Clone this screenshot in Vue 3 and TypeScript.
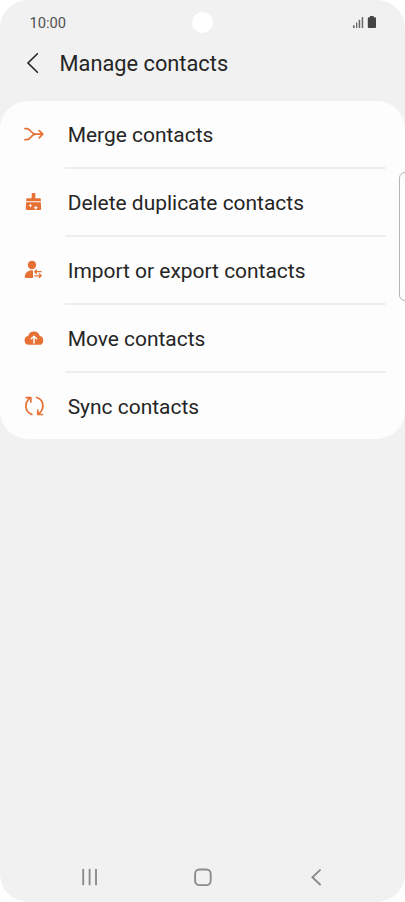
<script setup lang="ts">
type IconName = 'merge' | 'clean' | 'transfer' | 'cloud' | 'sync'

interface MenuItem {
  icon: IconName
  label: string
}

const items: MenuItem[] = [
  { icon: 'merge', label: 'Merge contacts' },
  { icon: 'clean', label: 'Delete duplicate contacts' },
  { icon: 'transfer', label: 'Import or export contacts' },
  { icon: 'cloud', label: 'Move contacts' },
  { icon: 'sync', label: 'Sync contacts' },
]
</script>

<template>
  <div class="screen">
    <div class="status">
      <span class="time">10:00</span>
      <svg class="indicators" width="26" height="14" viewBox="0 0 26 14">
        <path class="signal" d="M1 10.3h1.6V13H1zM4 7.6h1.3V13H4zM6.700 4.800h1.500V13H6.700zM9.700 2h1.500v11H9.700z" />
        <path class="battery" d="M18 1h3.600v1.200H23q1 0 1 1V12q0 1-1 1h-6.200q-1 0-1-1V3.200q0-1 1-1H18z" />
      </svg>
      <span class="camera"></span>
    </div>

    <header class="header">
      <svg class="back" width="14" height="22" viewBox="0 0 14 22">
        <path d="M11.400 1.700L2 11l9.400 9.300" />
      </svg>
      <h1 class="title">Manage contacts</h1>
    </header>

    <ul class="card">
      <li v-for="item in items" :key="item.label" class="row">
        <svg class="icon" width="40" height="40" viewBox="0 0 40 40">
          <g v-if="item.icon === 'merge'" class="line">
            <path d="M10 13.600H12C15.500 13.600 16.300 19.200 20.300 19.200H27.600M10 24.700H12C15.500 24.700 16.300 19.200 20.300 19.200M24.200 15.600L27.800 19.200L24.200 22.800" />
          </g>
          <g v-else-if="item.icon === 'clean'">
            <path class="fill" d="M16.700 10.700q0-.7.7-.7h2.200q.7 0 .7.700v4.500h4.300q1.300 0 1.300 1.300v1.800H11.200v-1.800q0-1.300 1.300-1.300h4.200z" />
            <path class="fill" d="M11.200 19.300h14.600l.4 6.500q0 1.200-1.200 1.200H12q-1.200 0-1.200-1.200z" />
            <path class="cut" d="M15.400 20.600l.6 1.500 1.500.6-1.500.6-.6 1.500-.6-1.500-1.500-.6 1.500-.6zM20.800 22.400l.7 1.700 1.700.7-1.700.7-.7 1.700-.7-1.700-1.700-.7 1.700-.7z" />
          </g>
          <g v-else-if="item.icon === 'transfer'">
            <circle class="fill" cx="17" cy="14" r="4.200" />
            <path class="fill" d="M16.800 19.200c.8 0 1.200.4 1.200 1.100v6.700h-6.700c-1.200 0-1.700-.7-1.500-1.900.5-3.500 3.400-5.900 7-5.900z" />
            <path class="thin" d="M26 20.700h-6.200M21.600 18.900l-1.900 1.800 1.900 1.800M19.800 24.800h6.400M24.300 23l1.900 1.800-1.900 1.800" />
          </g>
          <g v-else-if="item.icon === 'cloud'">
            <path class="fill" d="M14.200 25.800a4.400 4.400 0 0 1-1.100-8.700 6 6 0 0 1 11.700 0 4.400 4.400 0 0 1-1 8.700z" />
            <path class="arrow" d="M19 24v-6.500M16.300 19.800L19 17.200l2.700 2.600" />
          </g>
          <g v-else class="line">
            <path d="M16.800 27.400C9.700 24.700 8.600 16 15.400 10.700M11.300 10.700h4.500v4.300M21.700 10.500C29.200 13.200 30.100 21.800 23.200 27.200M27.400 27.500h-4.600v-4.300" />
          </g>
        </svg>
        <span class="label">{{ item.label }}</span>
      </li>
    </ul>

    <span class="edge-handle"></span>

    <nav class="nav">
      <svg width="24" height="24" viewBox="0 0 24 24"><path d="M6.200 4.800v14.600M12.600 4.800v14.600M19 4.800v14.600" /></svg>
      <svg width="24" height="24" viewBox="0 0 24 24"><rect x="4.100" y="4.500" width="15.600" height="15.600" rx="4.400" /></svg>
      <svg width="24" height="24" viewBox="0 0 24 24"><path d="M16 5.100L8.400 12.300l7.600 7.200" /></svg>
    </nav>
  </div>
</template>

<style>
body {
  margin: 0;
  background: #fff;
}
</style>

<style scoped>
.screen {
  position: relative;
  display: flex;
  flex-direction: column;
  width: 405px;
  height: 902px;
  overflow: hidden;
  border-radius: 28px;
  background: #f1f1f1;
  font-family: Roboto, sans-serif;
  color: #252525;
}
.status {
  display: flex;
  align-items: center;
  justify-content: space-between;
  height: 45px;
  padding: 0 27px 0 29.500px;
}
.time {
  font-size: 14.700px;
  line-height: 20px;
  padding-top: 1px;
  color: #505050;
}
.indicators {
  margin-top: -1px;
}
.signal {
  fill: #666;
}
.battery {
  fill: #444;
}
.camera {
  position: absolute;
  top: 12px;
  left: 191.500px;
  width: 21px;
  height: 21px;
  border-radius: 50%;
  background: #fff;
}
.header {
  display: flex;
  align-items: center;
  height: 36px;
  padding: 0 0 19.500px 26px;
}
.back {
  fill: none;
  stroke: #252525;
  stroke-width: 1.6;
  stroke-linecap: round;
}
.title {
  margin: 0 0 0 19.500px;
  padding-top: 2px;
  font-size: 21.800px;
  font-weight: 400;
  line-height: 30px;
}
.card {
  margin: 0;
  padding: 0;
  list-style: none;
  border-radius: 28px;
  background: #fdfdfd;
  height: 338.500px;
}
.row {
  position: relative;
  display: flex;
  align-items: center;
  height: 68px;
  padding-left: 15px;
}
.row + .row::before {
  content: '';
  position: absolute;
  top: -1.500px;
  left: 65px;
  right: 19.500px;
  height: 2px;
  background: #eeeeee;
}
.icon {
  margin-top: 1px;
}
.label {
  margin-left: 12.700px;
  padding-top: 1px;
  font-size: 20.950px;
  line-height: 28px;
}
.fill {
  fill: #e77034;
}
.cut {
  fill: #fdfdfd;
}
.line,
.thin,
.arrow {
  fill: none;
  stroke: #e77034;
  stroke-width: 1.700;
  stroke-linecap: round;
  stroke-linejoin: round;
}
.thin {
  stroke-width: 1.300;
}
.arrow {
  stroke: #fdfdfd;
  stroke-width: 1.500;
}
.edge-handle {
  position: absolute;
  top: 172px;
  left: 399px;
  box-sizing: border-box;
  width: 12px;
  height: 129px;
  border: 1.500px solid #b5b5b5;
  border-radius: 7px;
}
.nav {
  display: flex;
  justify-content: space-between;
  margin-top: auto;
  padding: 0 77px 13px;
}
.nav svg {
  fill: none;
  stroke: #8b8b8b;
  stroke-width: 1.900;
  stroke-linecap: round;
}
</style>
